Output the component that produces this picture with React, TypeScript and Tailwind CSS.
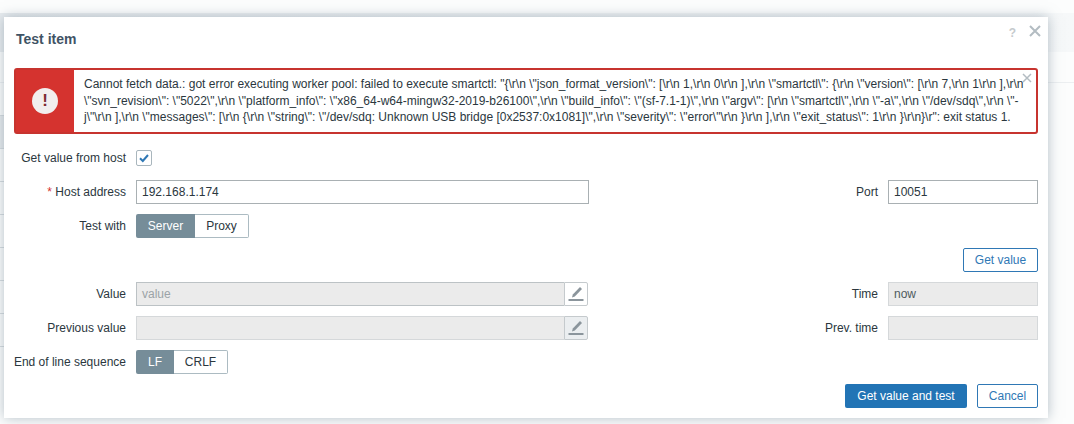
import React from 'react';

const font = "font-['Liberation_Sans',Arial,sans-serif]";

const FieldLabel = ({ children }: { children: React.ReactNode }) => (
  <div className="w-[122px] shrink-0 text-right text-[12px] leading-[24px] text-[#2b373e]">{children}</div>
);

const PencilButton = ({ disabled }: { disabled?: boolean }) => (
  <div
    className={`flex h-[24px] w-[24px] shrink-0 items-center justify-center rounded-r-[2px] border border-[#c5cacd] ${
      disabled ? 'bg-[#ebeef0]' : 'bg-white'
    }`}
  >
    <svg width="18" height="18" viewBox="0 0 18 18">
      <path d="M5.8 9.6 13 2 15 3.9 7.8 11.6 5 12.6Z" fill="#8b959c" />
      <rect x="1.5" y="14" width="15" height="2" fill="#8b959c" />
    </svg>
  </div>
);

const Segmented = ({ on, off, onWidth, offWidth }: { on: string; off: string; onWidth: string; offWidth: string }) => (
  <div className="flex h-[24px] text-[12px]">
    <div className={`flex items-center justify-center rounded-l-[2px] bg-[#768d99] text-white ${onWidth}`}>{on}</div>
    <div className={`flex items-center justify-center rounded-r-[2px] border border-l-0 border-[#acbbc2] bg-white text-[#2b373e] ${offWidth}`}>
      {off}
    </div>
  </div>
);

// faint page sitting behind the dialog, only its edges show
const PageBehind = () => (
  <div className="h-full w-full bg-[#fcfdfd]">
    <div className="h-[13px]" />
    <div className="h-[39px] bg-gradient-to-r from-[#e8ecef] to-[#f6f8f9]" />
    <div className="h-[31px] border-b border-[#eceff1]" />
    <div className="h-[33px] w-[4px] border-b border-[#d5dbdf]" />
    <div className="h-[33px] w-[4px] border-b border-[#d5dbdf] bg-[#e6eaed]" />
    <div className="h-[33px] w-[4px] border-b border-[#d5dbdf]" />
    <div className="h-[33px] w-[4px] border-b border-[#d5dbdf]" />
    <div className="h-[33px] w-[4px] border-b border-[#d5dbdf]" />
    <div className="h-[33px] w-[4px] border-b border-[#d5dbdf]" />
    <div className="h-[33px] w-[4px] border-b border-[#d5dbdf]" />
    <div className="h-[33px] w-[4px] border-b border-[#d5dbdf]" />
    <div className="mt-[3px] flex h-[10px] gap-[4px] pl-[24px]">
      <div className="w-[49px] rounded-t-[2px] bg-[#a8b2b8]" />
      <div className="w-[74px] rounded-t-[2px] border border-[#c5cacd] bg-white" />
    </div>
  </div>
);

const App = () => {
  return (
    <div className={`${font} relative h-[424px] w-[1074px] overflow-hidden`}>
      <PageBehind />
      <div className="absolute top-[17px] left-[4px] h-[401px] w-[1044px] bg-white shadow-[0_0_12px_rgba(110,130,145,0.5)]">
        <div className="absolute top-[7px] right-[32px] text-[12px] font-bold text-[#c5cacd]">?</div>
        <svg className="absolute top-[8px] right-[7px]" width="12" height="12" viewBox="0 0 12 12">
          <path d="M1 1 11 11M11 1 1 11" stroke="#b3bcc2" strokeWidth="2" />
        </svg>

        <div className="flex h-[44px] items-center pl-[12px] text-[14px] font-bold text-[#3f5365]">Test item</div>

        <div className="mx-[10px] mt-[7px] flex h-[66px] rounded-[3px] border-2 border-[#c7342f] bg-white">
          <div className="flex w-[58px] shrink-0 items-center justify-center bg-[#d5332f]">
            <div className="flex h-[26px] w-[26px] items-center justify-center rounded-full bg-[#f2eeee] text-[17px] font-bold text-[#7d2b33]">!</div>
          </div>
          <div className="relative flex-1 pt-[6px] pl-[10px] text-[12px] leading-[16.5px] text-[#2b373e]">
            <div className="whitespace-nowrap">{'Cannot fetch data.: got error executing worker pool: failed to execute smartctl: "{\\r\\n \\"json_format_version\\": [\\r\\n 1,\\r\\n 0\\r\\n ],\\r\\n \\"smartctl\\": {\\r\\n \\"version\\": [\\r\\n 7,\\r\\n 1\\r\\n ],\\r\\n'}</div>
            <div className="whitespace-nowrap">{'\\"svn_revision\\": \\"5022\\",\\r\\n \\"platform_info\\": \\"x86_64-w64-mingw32-2019-b26100\\",\\r\\n \\"build_info\\": \\"(sf-7.1-1)\\",\\r\\n \\"argv\\": [\\r\\n \\"smartctl\\",\\r\\n \\"-a\\",\\r\\n \\"/dev/sdq\\",\\r\\n \\"-'}</div>
            <div className="whitespace-nowrap">{'j\\"\\r\\n ],\\r\\n \\"messages\\": [\\r\\n {\\r\\n \\"string\\": \\"/dev/sdq: Unknown USB bridge [0x2537:0x1081]\\",\\r\\n \\"severity\\": \\"error\\"\\r\\n }\\r\\n ],\\r\\n \\"exit_status\\": 1\\r\\n }\\r\\n}\\r": exit status 1.'}</div>
            <svg className="absolute top-[3px] right-[4px]" width="10" height="10" viewBox="0 0 10 10">
              <path d="M1 1 9 9M9 1 1 9" stroke="#b3bcc2" strokeWidth="1.5" />
            </svg>
          </div>
        </div>

        <div className="mt-[12px] flex flex-col gap-[10px] pr-[10px]">
          <div className="flex h-[24px] items-center gap-[10px]">
            <FieldLabel>Get value from host</FieldLabel>
            <div className="flex h-[16px] w-[16px] items-center justify-center rounded-[2px] border border-[#a9b6bd]">
              <svg width="12" height="12" viewBox="0 0 12 12">
                <path d="M2 6.2 4.8 9 10 3" fill="none" stroke="#2f78b5" strokeWidth="2" />
              </svg>
            </div>
          </div>

          <div className="flex h-[24px] items-center gap-[10px]">
            <FieldLabel>
              <span className="text-[#d5332f]">*</span> Host address
            </FieldLabel>
            <div className="flex h-[24px] w-[453px] items-center border border-[#a9b0b3] px-[5px] text-[12px] text-[#2b373e]">192.168.1.174</div>
            <div className="ml-auto flex items-center gap-[10px]">
              <FieldLabel>Port</FieldLabel>
              <div className="flex h-[24px] w-[150px] items-center border border-[#a9b0b3] px-[5px] text-[12px] text-[#2b373e]">10051</div>
            </div>
          </div>

          <div className="flex h-[24px] items-center gap-[10px]">
            <FieldLabel>Test with</FieldLabel>
            <Segmented on="Server" off="Proxy" onWidth="w-[59px]" offWidth="w-[54px]" />
          </div>

          <div className="flex h-[24px] justify-end">
            <div className="flex w-[75px] items-center justify-center rounded-[2px] border border-[#2f78b5] text-[12px] text-[#2f78b5]">Get value</div>
          </div>

          <div className="flex h-[24px] items-center gap-[10px]">
            <FieldLabel>Value</FieldLabel>
            <div className="flex w-[452px]">
              <div className="flex h-[24px] flex-1 items-center border border-r-0 border-[#bcc2c5] bg-[#ebebeb] px-[5px] text-[12px] text-[#9ba3a7]">value</div>
              <PencilButton />
            </div>
            <div className="ml-auto flex items-center gap-[10px]">
              <FieldLabel>Time</FieldLabel>
              <div className="flex h-[24px] w-[150px] items-center border border-[#d5d8da] bg-[#ebebeb] px-[5px] text-[12px] text-[#4f5a60]">now</div>
            </div>
          </div>

          <div className="flex h-[24px] items-center gap-[10px]">
            <FieldLabel>Previous value</FieldLabel>
            <div className="flex w-[452px]">
              <div className="h-[24px] flex-1 border border-r-0 border-[#d5d8da] bg-[#ebebeb]" />
              <PencilButton disabled />
            </div>
            <div className="ml-auto flex items-center gap-[10px]">
              <FieldLabel>Prev. time</FieldLabel>
              <div className="h-[24px] w-[150px] border border-[#d5d8da] bg-[#ebebeb]" />
            </div>
          </div>

          <div className="flex h-[24px] items-center gap-[10px]">
            <FieldLabel>End of line sequence</FieldLabel>
            <Segmented on="LF" off="CRLF" onWidth="w-[38px]" offWidth="w-[54px]" />
          </div>

          <div className="flex h-[24px] justify-end gap-[10px]">
            <div className="flex w-[122px] items-center justify-center rounded-[2px] bg-[#2274b5] text-[12px] text-white">Get value and test</div>
            <div className="flex w-[61px] items-center justify-center rounded-[2px] border border-[#2f78b5] text-[12px] text-[#2f78b5]">Cancel</div>
          </div>
        </div>
      </div>
    </div>
  );
};

export default App;
